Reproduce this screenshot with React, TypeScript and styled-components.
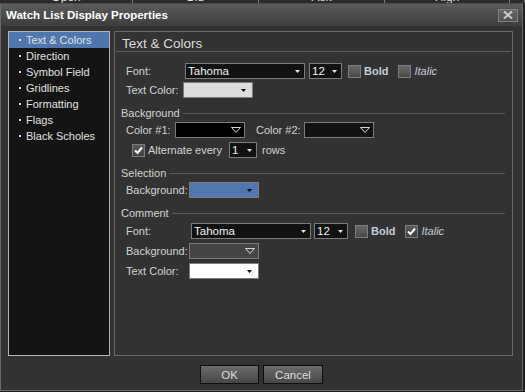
import styled, { createGlobalStyle } from "styled-components";

const GlobalStyle = createGlobalStyle`
  body {
    margin: 0;
    background: #1d1d1d;
    font-family: "Liberation Sans", Arial, sans-serif;
  }
`;

const navItems = [
  "Text & Colors",
  "Direction",
  "Symbol Field",
  "Gridlines",
  "Formatting",
  "Flags",
  "Black Scholes",
];

const Arrow = ({ kind }: { kind: "white" | "black" | "outline" }) =>
  kind === "outline" ? (
    <svg width="10" height="6" viewBox="0 0 10 6">
      <path d="M0.5 0.5 H9.5 L5 5.5 Z" fill="none" stroke="#d8d8d8" strokeWidth="1" />
    </svg>
  ) : (
    <svg width="5" height="3" viewBox="0 0 5 3">
      <path d="M0 0 H5 L2.5 3 Z" fill={kind === "white" ? "#e6e6e6" : "#000"} />
    </svg>
  );

const Check = () => (
  <svg width="9" height="9" viewBox="0 0 9 9">
    <path d="M1 4.5 L3.5 7 L8 1.5" fill="none" stroke="#fff" strokeWidth="2" />
  </svg>
);

const App = () => {
  return (
    <Page>
      <GlobalStyle />
      <GridStrip>
        <GridCell>Open</GridCell>
        <GridCell>Bid</GridCell>
        <GridCell>Ask</GridCell>
        <GridCell>High</GridCell>
        <GridCell />
      </GridStrip>
      <Window>
        <TitleBar>
          <Title>Watch List Display Properties</Title>
          <CloseButton>
            <svg width="10" height="8" viewBox="0 0 10 8">
              <path d="M1 0.5 L9 7.5 M9 0.5 L1 7.5" stroke="#cfcfcf" strokeWidth="2" />
            </svg>
          </CloseButton>
        </TitleBar>
        <Body>
          <Nav>
            {navItems.map((item, i) => (
              <NavItem key={item} $active={i === 0}>
                {item}
              </NavItem>
            ))}
          </Nav>
          <Panel>
            <Heading>Text &amp; Colors</Heading>
            <Content>
              <Row $mt={10}>
                <Label $w={59}>Font:</Label>
                <Select $w={120} $bg="#121212">
                  <span>Tahoma</span>
                  <Arrow kind="white" />
                </Select>
                <Select $w={33} $bg="#121212" $ml={4}>
                  <span>12</span>
                  <Arrow kind="white" />
                </Select>
                <CheckItem $ml={6}>
                  <Box />
                  <Bold>Bold</Bold>
                </CheckItem>
                <CheckItem $ml={10}>
                  <Box />
                  <Italic>Italic</Italic>
                </CheckItem>
              </Row>
              <Row $mt={1}>
                <Label $w={57}>Text Color:</Label>
                <Select $w={70} $bg="#dcdcdc" $pr={6}>
                  <span />
                  <Arrow kind="black" />
                </Select>
              </Row>

              <Section $mt={6}>
                <span>Background</span>
                <Line />
              </Section>
              <Row>
                <Label $w={49}>Color #1:</Label>
                <Select $w={70} $bg="#000" $pr={3}>
                  <span />
                  <Arrow kind="outline" />
                </Select>
                <Label $w={48} $ml={11}>
                  Color #2:
                </Label>
                <Select $w={70} $bg="#121212" $pr={3}>
                  <span />
                  <Arrow kind="outline" />
                </Select>
              </Row>
              <Row $mt={2} $indent={11}>
                <CheckItem>
                  <Box $checked>
                    <Check />
                  </Box>
                  <Text>Alternate every</Text>
                </CheckItem>
                <Select $w={28} $bg="#121212" $ml={7}>
                  <span>1</span>
                  <Arrow kind="white" />
                </Select>
                <Text $ml={5}>rows</Text>
              </Row>

              <Section $mt={6}>
                <span>Selection</span>
                <Line />
              </Section>
              <Row>
                <Label $w={63}>Background:</Label>
                <Select $w={70} $bg="#5077b0" $pr={6}>
                  <span />
                  <Arrow kind="black" />
                </Select>
              </Row>

              <Section $mt={6}>
                <span>Comment</span>
                <Line />
              </Section>
              <Row $mt={1}>
                <Label $w={65}>Font:</Label>
                <Select $w={120} $bg="#121212">
                  <span>Tahoma</span>
                  <Arrow kind="white" />
                </Select>
                <Select $w={34} $bg="#121212" $ml={3}>
                  <span>12</span>
                  <Arrow kind="white" />
                </Select>
                <CheckItem $ml={7}>
                  <Box />
                  <Bold>Bold</Bold>
                </CheckItem>
                <CheckItem $ml={10}>
                  <Box $checked>
                    <Check />
                  </Box>
                  <Italic>Italic</Italic>
                </CheckItem>
              </Row>
              <Row $mt={2}>
                <Label $w={63}>Background:</Label>
                <Select $w={70} $bg="#454545" $pr={3}>
                  <span />
                  <Arrow kind="outline" />
                </Select>
              </Row>
              <Row $mt={2}>
                <Label $w={63}>Text Color:</Label>
                <Select $w={70} $bg="#fff" $pr={6}>
                  <span />
                  <Arrow kind="black" />
                </Select>
              </Row>
            </Content>
          </Panel>
        </Body>
        <Footer>
          <Button>OK</Button>
          <Button $w={60}>Cancel</Button>
        </Footer>
      </Window>
    </Page>
  );
};

const Page = styled.div`
  width: 525px;
  height: 392px;
  overflow: hidden;
  background: #1d1d1d;
`;
const GridStrip = styled.div`
  height: 3px;
  overflow: hidden;
  display: grid;
  grid-template-columns: 133px 126px 126px 125px 1fr;
  background: #2b2b2b;
`;
const GridCell = styled.div`
  border-right: 1px solid #7a7a7a;
  text-align: center;
  font-size: 12px;
  line-height: 12px;
  margin-top: -9px;
  height: 12px;
  color: #e0e0e0;
`;
const Window = styled.div`
  width: 521px;
  height: 386px;
  border: 1px solid #6a6a6a;
  border-top-color: #4a4a4a;
  background: #323232;
  display: flex;
  flex-direction: column;
`;
const TitleBar = styled.div`
  height: 22px;
  flex-shrink: 0;
  display: flex;
  align-items: center;
  justify-content: space-between;
  padding: 0 4px 0 5px;
  background: linear-gradient(#5c5c5c, #3d3d3d);
`;
const Title = styled.span`
  color: #fff;
  font-weight: 700;
  font-size: 11.5px;
`;
const CloseButton = styled.div`
  width: 18px;
  height: 11px;
  border: 1px solid #808080;
  background: linear-gradient(#6a6a6a, #4e4e4e);
  display: flex;
  align-items: center;
  justify-content: center;
`;
const Body = styled.div`
  display: flex;
  gap: 4px;
  padding: 5px 9px 0 7px;
  height: 325px;
  flex-shrink: 0;
`;
const Nav = styled.div`
  width: 100px;
  border: 1px solid #b4b4b4;
  background: #141414;
`;
const NavItem = styled.div<{ $active?: boolean }>`
  height: 16px;
  line-height: 16px;
  font-size: 11px;
  color: #e2e2e2;
  padding-left: 17px;
  position: relative;
  background: ${(p) => (p.$active ? "#4f77ad" : "transparent")};
  &::before {
    content: "";
    position: absolute;
    left: 10px;
    top: 7px;
    width: 2px;
    height: 2px;
    background: #e2e2e2;
  }
`;
const Panel = styled.div`
  flex: 1;
  border: 1px solid #686868;
  display: flex;
  flex-direction: column;
`;
const Heading = styled.div`
  height: 17px;
  padding-top: 2px;
  margin: 0 1px;
  border-bottom: 1px solid #5e5e5e;
  padding-left: 6px;
  font-size: 13.5px;
  line-height: 19px;
  color: #dcdcdc;
`;
const Content = styled.div`
  display: flex;
  flex-direction: column;
  padding: 0 6px;
  font-size: 11px;
  color: #d2d2d2;
`;
const Row = styled.div<{ $mt?: number; $indent?: number }>`
  display: flex;
  align-items: center;
  height: 18px;
  margin-top: ${(p) => p.$mt ?? 0}px;
  padding-left: ${(p) => p.$indent ?? 5}px;
`;
const Label = styled.span<{ $w: number; $ml?: number }>`
  width: ${(p) => p.$w}px;
  margin-left: ${(p) => p.$ml ?? 0}px;
  flex-shrink: 0;
  white-space: nowrap;
`;
const Text = styled.span<{ $ml?: number }>`
  margin-left: ${(p) => p.$ml ?? 0}px;
`;
const Select = styled.div<{ $w: number; $bg: string; $ml?: number; $pr?: number }>`
  box-sizing: border-box;
  width: ${(p) => p.$w}px;
  height: 16px;
  margin-left: ${(p) => p.$ml ?? 0}px;
  border: 1px solid #7c7c7c;
  background: ${(p) => p.$bg};
  display: flex;
  align-items: center;
  justify-content: space-between;
  padding: 0 ${(p) => p.$pr ?? 4}px 0 2px;
  color: #f0f0f0;
  font-size: 11.5px;
`;
const CheckItem = styled.div<{ $ml?: number }>`
  display: flex;
  align-items: center;
  gap: 3px;
  margin-left: ${(p) => p.$ml ?? 0}px;
`;
const Box = styled.div<{ $checked?: boolean }>`
  box-sizing: border-box;
  width: 13px;
  height: 13px;
  border: 1px solid #7e7e7e;
  background: ${(p) =>
    p.$checked ? "linear-gradient(#5a5a5a, #3e3e3e)" : "linear-gradient(#686868, #4a4a4a)"};
  display: flex;
  align-items: center;
  justify-content: center;
`;
const Bold = styled.span`
  font-weight: 700;
  color: #c4cede;
`;
const Italic = styled.span`
  font-style: italic;
  color: #c4cede;
`;
const Section = styled.div<{ $mt?: number }>`
  display: flex;
  align-items: center;
  gap: 3px;
  height: 16px;
  margin-top: ${(p) => p.$mt ?? 0}px;
  padding-right: 1px;
`;
const Line = styled.div`
  flex: 1;
  height: 1px;
  background: #5a5a5a;
`;
const Footer = styled.div`
  flex: 1;
  display: flex;
  justify-content: center;
  gap: 4px;
  padding-top: 9px;
`;
const Button = styled.div<{ $w?: number }>`
  box-sizing: border-box;
  width: ${(p) => p.$w ?? 59}px;
  height: 19px;
  border: 1px solid #0e0e0e;
  background: linear-gradient(#6b6b6b, #474747);
  color: #dedede;
  font-size: 11.5px;
  display: flex;
  align-items: center;
  justify-content: center;
`;

export default App;
